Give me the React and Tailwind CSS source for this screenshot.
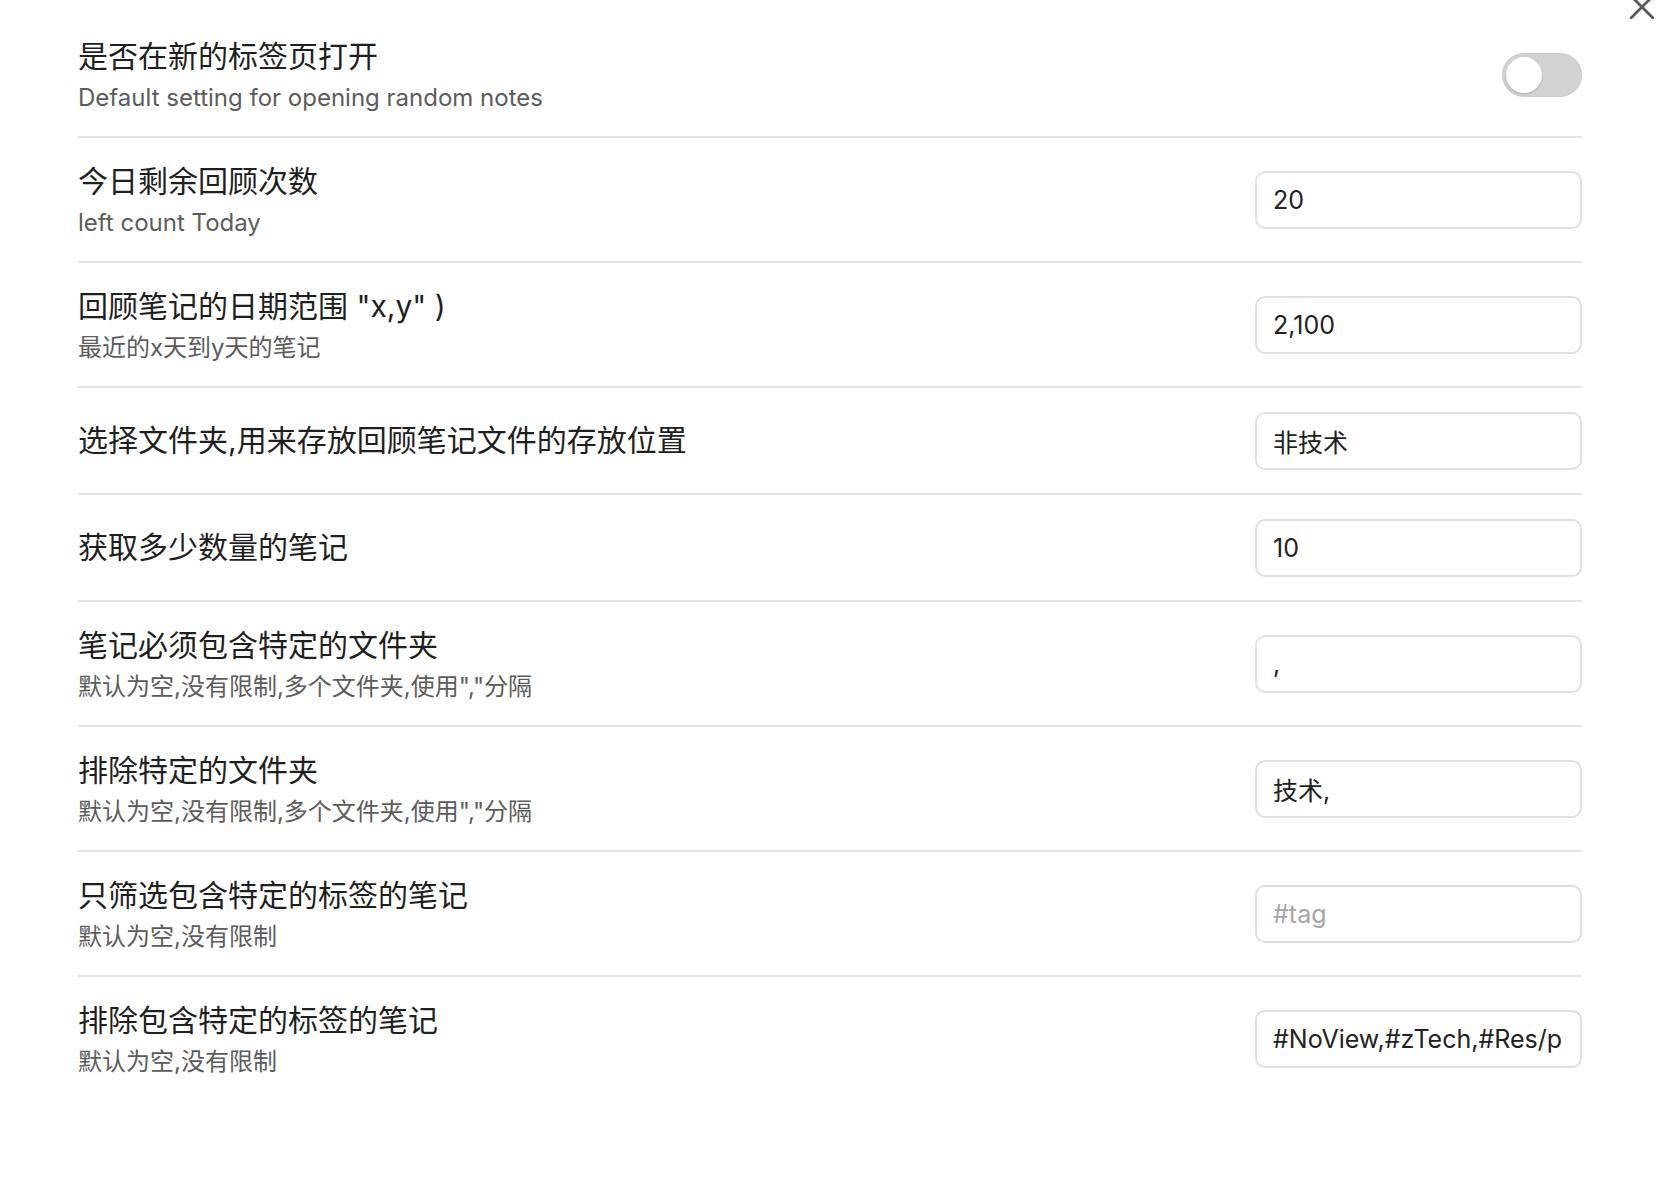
import React from "react";

const rows = [
  { title: "今日剩余回顾次数", desc: "left count Today", value: "20" },
  { title: '回顾笔记的日期范围 "x,y" )', desc: "最近的x天到y天的笔记", value: "2,100" },
  { title: "选择文件夹,用来存放回顾笔记文件的存放位置", value: "非技术" },
  { title: "获取多少数量的笔记", value: "10" },
  { title: "笔记必须包含特定的文件夹", desc: '默认为空,没有限制,多个文件夹,使用","分隔', value: "," },
  { title: "排除特定的文件夹", desc: '默认为空,没有限制,多个文件夹,使用","分隔', value: "技术," },
  { title: "只筛选包含特定的标签的笔记", desc: "默认为空,没有限制", value: "", placeholder: "#tag" },
  { title: "排除包含特定的标签的笔记", desc: "默认为空,没有限制", value: "#NoView,#zTech,#Res/p" },
];

const font = { fontFamily: '"Inter", "Noto Sans CJK SC", sans-serif' };

function Info({ title, desc }) {
  return (
    <div className="flex flex-col min-w-0">
      <div className="text-[30px] leading-[39px] text-[#1f1f1f] whitespace-nowrap">{title}</div>
      {desc && (
        <div className="mt-[7px] text-[24px] leading-[30px] text-[#5c5c5c] whitespace-nowrap">{desc}</div>
      )}
    </div>
  );
}

export default function App() {
  return (
    <div className="relative w-full h-[1192px] bg-white overflow-hidden" style={font}>
      <svg
        className="absolute right-[8px] top-[-5px]"
        width="24"
        height="24"
        viewBox="0 0 24 24"
        fill="none"
        stroke="#595959"
        strokeWidth="2.8"
        strokeLinecap="round"
      >
        <line x1="1" y1="1" x2="23" y2="23" />
        <line x1="23" y1="1" x2="1" y2="23" />
      </svg>

      <div className="pl-[78px] pr-[80px] pt-[13px]">
        <div className="flex items-center justify-between py-[23.5px]">
          <Info title="是否在新的标签页打开" desc="Default setting for opening random notes" />
          <div className="w-[80px] h-[44px] rounded-full bg-[#d2d2d2] p-[4px] flex items-center shadow-[inset_0_0_0_1px_rgba(0,0,0,0.04)]">
            <div className="w-[36px] h-[36px] rounded-full bg-white shadow-[0_1px_2px_rgba(0,0,0,0.18)]" />
          </div>
        </div>

        {rows.map((r, i) => (
          <div
            key={i}
            className="flex items-center justify-between border-t-2 border-[#e4e4e4] py-[23.5px]"
          >
            <Info title={r.title} desc={r.desc} />
            <input
              type="text"
              readOnly
              defaultValue={r.value}
              placeholder={r.placeholder}
              className="w-[327px] h-[58px] shrink-0 rounded-[10px] border-2 border-[#e0e0e0] bg-white px-[16px] text-[25px] text-[#222222] placeholder:text-[#a6a6a6] outline-none"
              style={font}
            />
          </div>
        ))}
      </div>
    </div>
  );
}
